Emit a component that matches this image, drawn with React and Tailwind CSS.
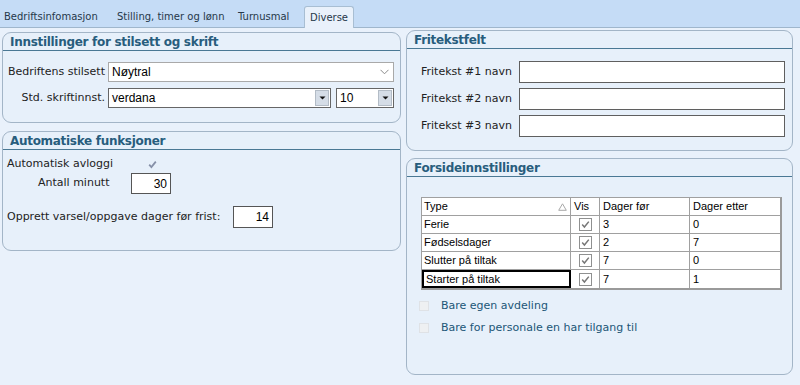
import React from "react";

const F = { fontFamily: '"DejaVu Sans", Verdana, sans-serif' };
const A = { fontFamily: '"Liberation Sans", Arial, sans-serif' };

function Panel({ title, className = "", children }) {
  return (
    <div className={`border border-[#a3b5c7] rounded-[9px] bg-[#e7f0fa] overflow-hidden ${className}`}>
      <div className="h-[18px] border-b border-[#4a7894] pl-[7px] flex items-center">
        <span className="text-[12px] font-bold tracking-[-0.3px] text-[#285d7d] leading-none" style={F}>
          {title}
        </span>
      </div>
      {children}
    </div>
  );
}

function Check({ color = "#7c7c7c", w = 1.5 }) {
  return (
    <svg width="9" height="9" viewBox="0 0 9 9">
      <path d="M1.2 4.6 L3.4 7 L7.8 1.6" fill="none" stroke={color} strokeWidth={w} />
    </svg>
  );
}

function BoxCheck() {
  return (
    <div className="w-[13px] h-[13px] border border-[#8f9090] bg-white flex items-center justify-center">
      <Check color="#777" />
    </div>
  );
}

function Tri() {
  return (
    <svg width="7" height="4" viewBox="0 0 7 4">
      <path d="M0.5 0.5 L6.5 0.5 L3.5 3.5 Z" fill="#111" />
    </svg>
  );
}

const rows = [
  ["Ferie", "3", "0"],
  ["Fødselsdager", "2", "7"],
  ["Slutter på tiltak", "7", "0"],
  ["Starter på tiltak", "7", "1"],
];

export default function App() {
  return (
    <div className="w-[800px] h-[385px] bg-[#e9f1fb] text-[11px] text-[#222] overflow-hidden" style={F}>
      {/* Tab bar */}
      <div className="h-[28px] bg-[#c5dcf6] border-b border-[#9fb6cc] flex items-end text-[10px] text-[#26384a]" style={F}>
        <div className="w-[113px] pl-[4px] h-[22px] flex items-center">Bedriftsinfomasjon</div>
        <div className="w-[121px] pl-[4px] h-[22px] flex items-center">Stilling, timer og lønn</div>
        <div className="w-[70px] pl-[4px] h-[22px] flex items-center">Turnusmal</div>
        <div className="w-[50px] h-[22px] -mb-[1px] bg-[#e9f1fb] border border-b-0 border-[#a8bed3] rounded-t-[3px] flex items-center justify-center">
          Diverse
        </div>
      </div>

      <div className="flex">
        {/* Left column */}
        <div className="ml-[2px] w-[399px] flex flex-col">
          <Panel title="Innstillinger for stilsett og skrift" className="mt-[4px] h-[91px]">
            <div className="mt-[11px] flex flex-col gap-[6px]">
              <div className="flex items-center h-[20px]">
                <div className="w-[103px] text-right pr-[1px]">Bedriftens stilsett</div>
                <div className="ml-[2px] w-[286px] h-[20px] bg-white border border-[#a9a9a9] flex items-center justify-between pl-[3px] pr-[4px]" style={A}>
                  <span className="text-[12px] text-black">Nøytral</span>
                  <svg width="9" height="6" viewBox="0 0 9 6">
                    <path d="M0.5 0.8 L4.5 4.8 L8.5 0.8" fill="none" stroke="#8a8a8a" strokeWidth="1" />
                  </svg>
                </div>
              </div>
              <div className="flex items-center h-[20px]">
                <div className="w-[103px] text-right pr-[1px]">Std. skriftinnst.</div>
                <div className="ml-[2px] w-[223px] h-[20px] bg-white border border-[#666] flex items-stretch" style={A}>
                  <span className="flex-1 pl-[3px] text-[12px] text-black flex items-center">verdana</span>
                  <div className="w-[14px] m-[1px] bg-[#d5dde7] border border-[#b3bcc6] flex items-center justify-center">
                    <Tri />
                  </div>
                </div>
                <div className="ml-[5px] w-[58px] h-[20px] bg-white border border-[#666] flex items-stretch" style={A}>
                  <span className="flex-1 pl-[3px] text-[12px] text-black flex items-center">10</span>
                  <div className="w-[14px] m-[1px] bg-[#d5dde7] border border-[#b3bcc6] flex items-center justify-center">
                    <Tri />
                  </div>
                </div>
              </div>
            </div>
          </Panel>

          <Panel title="Automatiske funksjoner" className="mt-[8px] h-[120px]">
            <div className="mt-[7px] flex items-center h-[14px] pl-[4px]">
              <span className="w-[141px]">Automatisk avloggi</span>
              <Check color="#8690a8" w={1.8} />
            </div>
            <div className="mt-[2px] flex items-center h-[21px]">
              <span className="pl-[35px] w-[128px]">Antall minutt</span>
              <div className="w-[40px] h-[21px] bg-white border border-[#555] flex items-center justify-end pr-[3px] text-[12px] text-black" style={A}>30</div>
            </div>
            <div className="mt-[12px] flex items-center h-[22px] pl-[4px]">
              <span className="w-[226px]">Opprett varsel/oppgave dager før frist:</span>
              <div className="w-[40px] h-[22px] bg-white border border-[#555] flex items-center justify-end pr-[3px] text-[12px] text-black" style={A}>14</div>
            </div>
          </Panel>
        </div>

        {/* Right column */}
        <div className="ml-[5px] w-[387px] flex flex-col">
          <Panel title="Fritekstfelt" className="mt-[2px] h-[121px]">
            <div className="mt-[12px] flex flex-col gap-[5px]">
              {[1, 2, 3].map((n) => (
                <div key={n} className="flex items-center h-[22px]">
                  <span className="pl-[14px] w-[112px]">Fritekst #{n} navn</span>
                  <div className="w-[266px] h-[22px] bg-white border border-[#5f5f5f]" />
                </div>
              ))}
            </div>
          </Panel>

          <Panel title="Forsideinnstillinger" className="mt-[7px] h-[217px]">
            <div className="mt-[20px] ml-[14px] w-[361px] bg-white border border-[#a0a0a0] border-r-2 border-b-2 border-r-[#9a9a9a] border-b-[#9a9a9a] text-[11px] text-black" style={A}>
              <div className="flex h-[18px] border-b border-[#a0a0a0]">
                <div className="w-[149px] border-r border-[#a0a0a0] pl-[2px] flex items-center justify-between pr-[3px]">
                  <span>Type</span>
                  <svg width="9" height="8" viewBox="0 0 9 8">
                    <path d="M4.5 0.8 L8.3 7.3 L0.7 7.3 Z" fill="none" stroke="#a8a8a8" strokeWidth="1" />
                  </svg>
                </div>
                <div className="w-[29px] border-r border-[#a0a0a0] pl-[3px] flex items-center">Vis</div>
                <div className="w-[90px] border-r border-[#a0a0a0] pl-[3px] flex items-center">Dager før</div>
                <div className="flex-1 pl-[3px] flex items-center">Dager etter</div>
              </div>
              {rows.map((r, i) => (
                <div key={r[0]} className={`flex h-[18px] ${i < rows.length - 1 ? "border-b border-[#a0a0a0]" : ""}`}>
                  <div className={`w-[149px] pl-[2px] flex items-center ${i === rows.length - 1 ? "border-2 border-black" : "border-r border-[#a0a0a0]"}`}>
                    {r[0]}
                  </div>
                  <div className="w-[29px] border-r border-[#a0a0a0] flex items-center justify-center">
                    <BoxCheck />
                  </div>
                  <div className="w-[90px] border-r border-[#a0a0a0] pl-[3px] flex items-center">{r[1]}</div>
                  <div className="flex-1 pl-[3px] flex items-center">{r[2]}</div>
                </div>
              ))}
            </div>
            <div className="mt-[9px] flex flex-col gap-[8px] text-[#215677]">
              <div className="flex items-center h-[14px] pl-[12px]">
                <div className="w-[10px] h-[10px] bg-[#eef0f2] border border-[#dfe2e6]" />
                <span className="ml-[12px]">Bare egen avdeling</span>
              </div>
              <div className="flex items-center h-[14px] pl-[12px]">
                <div className="w-[10px] h-[10px] bg-[#eef0f2] border border-[#dfe2e6]" />
                <span className="ml-[12px]">Bare for personale en har tilgang til</span>
              </div>
            </div>
          </Panel>
        </div>
      </div>
    </div>
  );
}
